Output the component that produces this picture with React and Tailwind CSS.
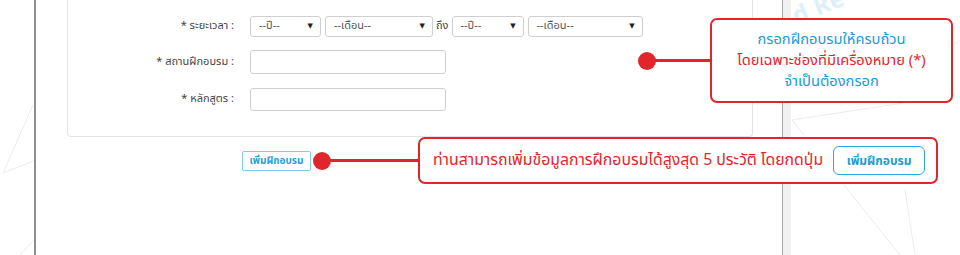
import React from 'react';

const thai = { fontFamily: '"Noto Sans Thai", "Noto Sans", "DejaVu Sans", sans-serif' };

const Select = ({ label, className }) => (
  <div className={`flex items-center justify-between h-[21px] border border-[#cfcfcf] rounded-[3px] bg-white pl-[8px] pr-[7px] text-[11px] text-[#555] ${className}`}>
    <span>{label}</span>
    <span className="text-[7px] text-[#222]">▼</span>
  </div>
);

const Row = ({ label, children, className }) => (
  <div className={`flex items-center ${className}`}>
    <div className="w-[170px] text-right text-[11px] text-[#444] pr-[4px]">{label}</div>
    <div className="ml-[12px] flex items-center">{children}</div>
  </div>
);

const Dot = () => <div className="w-[18px] h-[18px] rounded-full bg-[#e1262b] shrink-0" />;

export default function App() {
  return (
    <div className="relative w-[960px] h-[255px] overflow-hidden bg-white" style={thai}>
      <svg className="absolute inset-0" width="960" height="255" stroke="#ececec" strokeWidth="1" fill="none">
        <path d="M33 105 L3 173 L36 160" />
        <path d="M34 240 L20 255" />
        <path d="M792 120 L900 255" />
        <path d="M792 120 L955 95" />
        <path d="M905 190 L915 255" />
        <path d="M930 60 L960 40" />
      </svg>

      <div className="relative flex h-full">
        <div className="w-[34px] shrink-0" />
        <div className="w-[749px] shrink-0 border-l-2 border-r border-l-[#8e8e8e] border-r-[#a8a8a8] bg-white">
          <div className="ml-[31px] w-[686px] h-[137px] border border-t-0 border-[#e4e4e4] rounded-b-[4px] pt-[16px]">
            <Row label="* ระยะเวลา :">
              <Select label="--ปี--" className="w-[71px]" />
              <Select label="--เดือน--" className="w-[108px] ml-[4px]" />
              <span className="text-[11px] text-[#444] mx-[3px]">ถึง</span>
              <Select label="--ปี--" className="w-[72px]" />
              <Select label="--เดือน--" className="w-[115px] ml-[4px]" />
            </Row>
            <Row label="* สถานฝึกอบรม :" className="mt-[13px]">
              <div className="w-[196px] h-[24px] border border-[#cfcfcf] rounded-[3px]" />
            </Row>
            <Row label="* หลักสูตร :" className="mt-[14px]">
              <div className="w-[196px] h-[23px] border border-[#cfcfcf] rounded-[3px]" />
            </Row>
          </div>
          <div className="mt-[14px] ml-[206px] w-[69px] h-[20px] border border-[#7fcdea] rounded-[2px] flex items-center justify-center text-[10px] font-bold text-[#2a9fd6]">
            เพิ่มฝึกอบรม
          </div>
        </div>
        <div className="w-[8px] shrink-0 bg-[#f1f1f1]" />
        <div className="flex-1" />
      </div>

      <div className="absolute left-[792px] top-[-10px] -rotate-[22deg] text-[24px] font-bold text-[#dcf0fa] tracking-wide">
        d Re
      </div>

      {/* callout 1 */}
      <div className="absolute left-[638px] top-[18px] flex items-center">
        <Dot />
        <div className="w-[56px] h-[3px] bg-[#e1262b] -ml-[2px]" />
        <div className="w-[243px] h-[85px] border-2 border-[#e1262b] rounded-[7px] bg-white flex flex-col items-center justify-center text-[14.7px] leading-[21px]">
          <div className="text-[#1b9ad6]">กรอกฝึกอบรมให้ครบถ้วน</div>
          <div className="text-[#e1262b]">โดยเฉพาะช่องที่มีเครื่องหมาย (*)</div>
          <div className="text-[#1b9ad6]">จำเป็นต้องกรอก</div>
        </div>
      </div>

      {/* callout 2 */}
      <div className="absolute left-[313px] top-[137px] flex items-center">
        <Dot />
        <div className="w-[89px] h-[3px] bg-[#e1262b] -ml-[2px]" />
        <div className="w-[520px] h-[47px] border-2 border-[#e1262b] rounded-[7px] bg-white flex items-center pl-[13px] text-[15.8px] text-[#e1262b]">
          <span>ท่านสามารถเพิ่มข้อมูลการฝึกอบรมได้สูงสุด 5 ประวัติ โดยกดปุ่ม</span>
          <div className="ml-[10px] w-[92px] h-[29px] border border-[#2ea3dc] rounded-[6px] flex items-center justify-center text-[12px] font-bold text-[#1b9ad6]">
            เพิ่มฝึกอบรม
          </div>
        </div>
      </div>
    </div>
  );
}
